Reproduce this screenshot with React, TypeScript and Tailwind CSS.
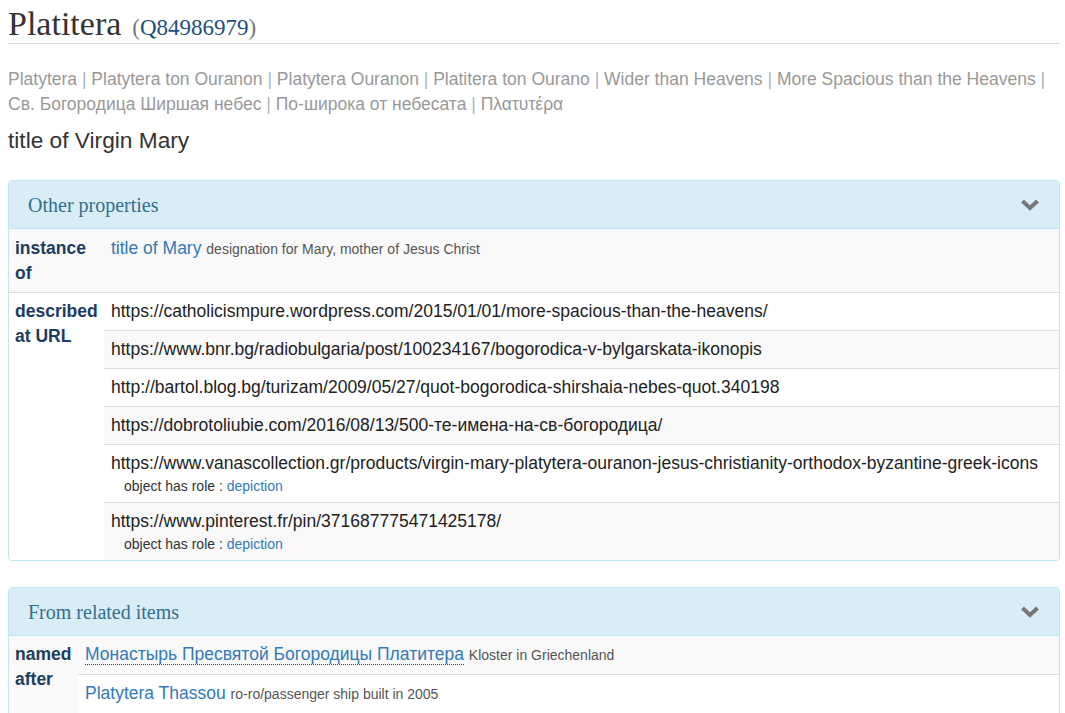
import React from "react";

const Chevron = () => (
  <svg width="20" height="14" viewBox="0 0 20 14" className="block">
    <polyline points="2.5,3 10,10 17.5,3" fill="none" stroke="#777" strokeWidth="4" strokeLinejoin="miter" />
  </svg>
);

const PanelHeader = ({ title }: { title: string }) => (
  <div className="flex items-center justify-between h-[48px] bg-[#d9edf7] border-b border-[#bce8f1] pl-[19px] pr-[19px] rounded-t-[4px]">
    <span className="font-['Liberation_Serif','Times_New_Roman',serif] text-[20px] text-[#31708f]">{title}</span>
    <Chevron />
  </div>
);

type Inner = { content: React.ReactNode; role?: boolean; bg: string };

const Qual = () => (
  <div className="pl-[13px] text-[14px] leading-[20px] text-[#333]">
    object has role : <span className="text-[#337ab7]">depiction</span>
  </div>
);

const urls: Inner[] = [
  { content: "https://catholicismpure.wordpress.com/2015/01/01/more-spacious-than-the-heavens/", bg: "bg-white" },
  { content: "https://www.bnr.bg/radiobulgaria/post/100234167/bogorodica-v-bylgarskata-ikonopis", bg: "bg-[#f9f9f9]" },
  { content: "http://bartol.blog.bg/turizam/2009/05/27/quot-bogorodica-shirshaia-nebes-quot.340198", bg: "bg-white" },
  { content: "https://dobrotoliubie.com/2016/08/13/500-те-имена-на-св-богородица/", bg: "bg-[#f9f9f9]" },
  { content: "https://www.vanascollection.gr/products/virgin-mary-platytera-ouranon-jesus-christianity-orthodox-byzantine-greek-icons", role: true, bg: "bg-white" },
  { content: "https://www.pinterest.fr/pin/371687775471425178/", role: true, bg: "bg-[#f9f9f9]" },
];

const Label = ({ children }: { children: React.ReactNode }) => (
  <span className="font-bold text-[#1b3d61]">{children}</span>
);

const Sep = () => <span className="text-[#a8b4c4]">|</span>;

export default function App() {
  return (
    <div className="font-['Liberation_Sans',Arial,sans-serif] text-[#333] pl-[8px] pr-[5px] pb-4 bg-white min-h-screen">
      <div className="flex items-baseline h-[44px] pt-[7px] border-b border-[#dddddd] font-['Liberation_Serif','Times_New_Roman',serif]">
        <span className="text-[34px] leading-none text-[#333]">Platitera</span>
        <span className="ml-[11px] text-[23px] leading-none text-[#777]">
          (<span className="text-[#1f4e7c]">Q84986979</span>)
        </span>
      </div>

      <div className="mt-[23px] text-[17.5px] leading-[25px] text-[#999]">
        Platytera <Sep /> Platytera ton Ouranon <Sep /> Platytera Ouranon <Sep /> Platitera ton Ourano <Sep /> Wider than Heavens <Sep /> More Spacious than the Heavens <Sep />
        <br />
        Св. Богородица Ширшая небес <Sep /> По-широка от небесата <Sep /> Πλατυτέρα
      </div>

      <div className="mt-[8px] text-[22.7px] leading-[30px] text-[#333]">title of Virgin Mary</div>

      <div className="mt-[25px] border border-[#bce8f1] rounded-[4px] overflow-hidden">
        <PanelHeader title="Other properties" />
        <div className="flex bg-[#f9f9f9] text-[17.5px] leading-[25px]">
          <div className="w-[95px] shrink-0 pl-[6px] pt-[7px] pb-[6px]">
            <Label>instance of</Label>
          </div>
          <div className="flex-1 pl-[7px] pt-[7px] pb-[6px]">
            <span className="text-[#337ab7]">title of Mary</span>{" "}
            <span className="text-[14px] text-[#555]">designation for Mary, mother of Jesus Christ</span>
          </div>
        </div>
        <div className="flex bg-white border-t border-[#dddddd] text-[17.5px] leading-[25px]">
          <div className="w-[95px] shrink-0 pl-[6px] py-[6px]">
            <Label>described at URL</Label>
          </div>
          <div className="flex-1 flex flex-col">
            {urls.map((u, i) => (
              <div key={i} className={`${u.bg} ${i > 0 ? "border-t border-[#dddddd]" : ""} pl-[7px] py-[6px] text-[#222]`}>
                <div>{u.content}</div>
                {u.role && <Qual />}
              </div>
            ))}
          </div>
        </div>
      </div>

      <div className="mt-[26px] border border-[#bce8f1] rounded-[4px] overflow-hidden">
        <PanelHeader title="From related items" />
        <div className="flex bg-[#f9f9f9] text-[17.5px] leading-[25px]">
          <div className="w-[69px] shrink-0 pl-[6px] py-[6px]">
            <Label>named after</Label>
          </div>
          <div className="flex-1 flex flex-col">
            <div className="bg-[#f9f9f9] pl-[7px] py-[6px]">
              <span className="text-[#337ab7] border-b border-dotted border-[#cc0000] leading-[20px] inline-block">Монастырь Пресвятой Богородицы Платитера</span>{" "}
              <span className="text-[14px] text-[#555]">Kloster in Griechenland</span>
            </div>
            <div className="bg-white border-t border-[#dddddd] pl-[7px] py-[6px]">
              <span className="text-[#337ab7]">Platytera Thassou</span>{" "}
              <span className="text-[14px] text-[#555]">ro-ro/passenger ship built in 2005</span>
            </div>
            <div className="bg-[#f9f9f9] border-t border-[#dddddd] pl-[7px] py-[6px]">&nbsp;</div>
          </div>
        </div>
      </div>
    </div>
  );
}
